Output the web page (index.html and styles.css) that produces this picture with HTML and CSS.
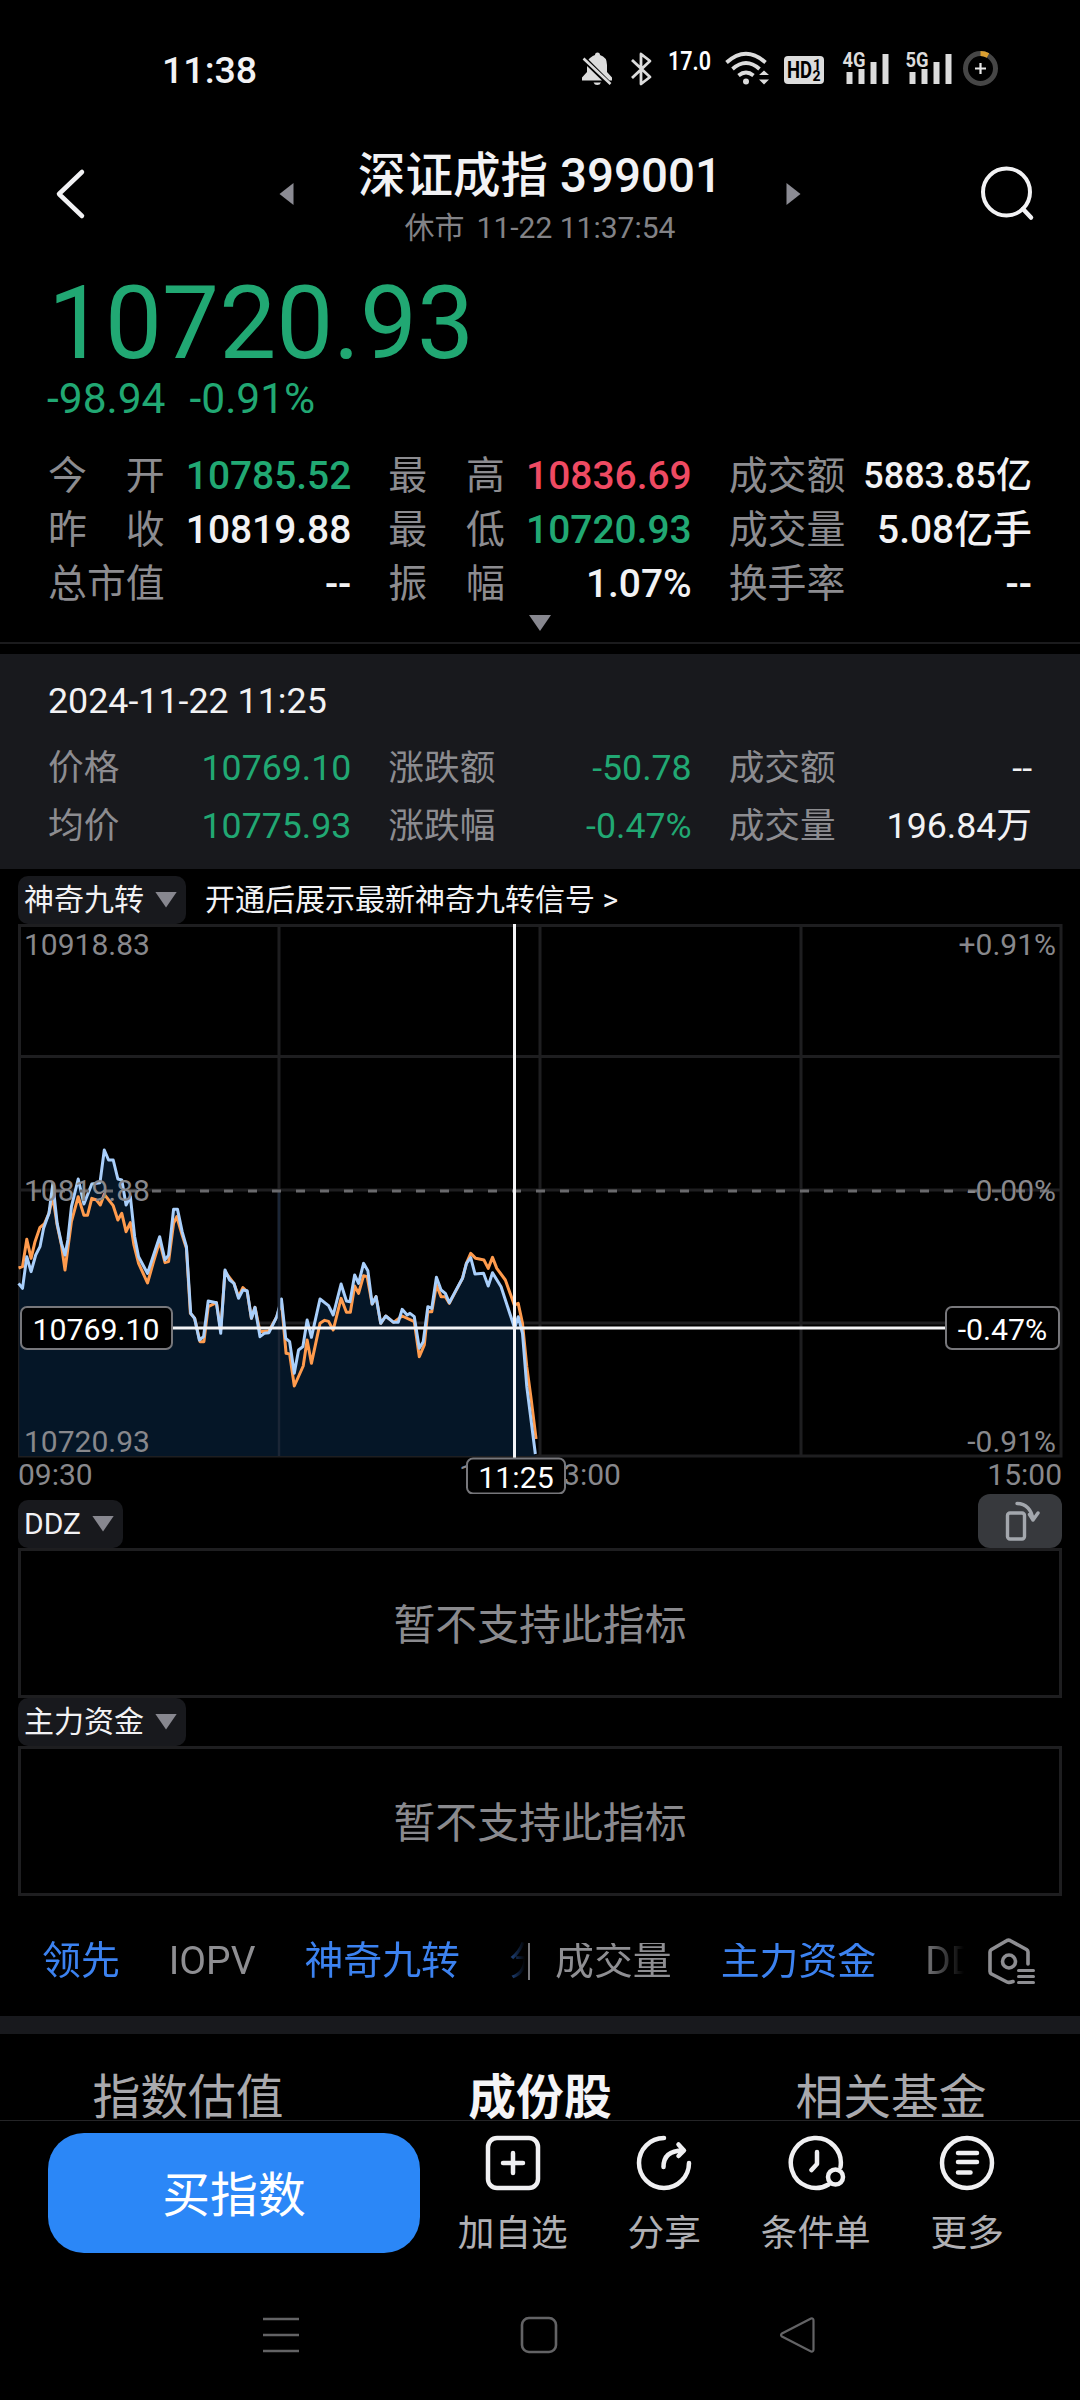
FILE: index.html
```html
<!DOCTYPE html>
<html lang="zh-CN">
<head>
<meta charset="utf-8">
<title>深证成指 399001</title>
<link rel="stylesheet" href="styles.css">
</head>
<body>
<div class="screen">
  <div class="status">
    <span class="clock">11:38</span>
    <svg class="status-icons" width="420" height="40" viewBox="580 50 420 40" fill="#dcdcdc">
      <path d="M590 58 Q593 55.500 595 55 Q595 52.500 597.500 52.500 Q600 52.500 600 55 Q607 57 607 65 V72 L612 77.500 V80.500 L609.500 80.500 L588.500 59.500Z"/>
      <path d="M587 66 L602 80.500 H582 V77.500 L587 72Z"/>
      <path d="M583.500 58.500 L610.500 84" stroke="#dcdcdc" stroke-width="2.600"/>
      <path d="M593.500 82.500 H601 Q600 85 597.200 85 Q594.500 85 593.500 82.500Z"/>
      <path d="M632 60 L650 77 L641 84 V54 L650 61 L632 78" fill="none" stroke="#dcdcdc" stroke-width="2.800" stroke-linejoin="round"/>
      <text x="668" y="70" class="speed" textLength="43" lengthAdjust="spacingAndGlyphs">17.0</text>
      <g fill="none" stroke="#dcdcdc" stroke-width="3.800">
        <path d="M726.500 62.500 Q746 45 765.500 62.500"/>
        <path d="M732.500 69 Q746 57 759.500 69"/>
        <path d="M738.500 75.500 Q746 69.500 753.500 75.500"/>
      </g>
      <circle cx="746" cy="81.500" r="3"/>
      <path d="M759 75 L764 70.500 L769 75Z M759 79.500 L764 84.500 L769 79.500Z"/>
      <rect x="784" y="56" width="40" height="28" rx="4"/>
      <text x="787" y="78" class="hd" textLength="25" lengthAdjust="spacingAndGlyphs">HD</text>
      <text x="813" y="70" class="hd-small">1</text>
      <text x="812.500" y="81" class="hd-small">2</text>
      <text x="842.500" y="67" class="net" textLength="23" lengthAdjust="spacingAndGlyphs">4G</text>
      <path d="M846.500 72h6v12h-6z M858.500 69h6v15h-6z M870.500 62h6v22h-6z M882.500 54h6v30h-6z"/>
      <text x="905.500" y="67" class="net" textLength="23" lengthAdjust="spacingAndGlyphs">5G</text>
      <path d="M909.500 72h6v12h-6z M921.500 69h6v15h-6z M933.500 62h6v22h-6z M945.500 54h6v30h-6z"/>
      <circle cx="980.500" cy="68.500" r="15" fill="none" stroke="#464646" stroke-width="5"/>
      <path d="M980.500 53.500 A15 15 0 0 1 988 55.500" fill="none" stroke="#dca030" stroke-width="5"/>
      <path d="M975 68.500 H986 M980.500 63 V74" stroke="#e8e8e8" stroke-width="2.200"/>
    </svg>
  </div>

  <header class="header">
    <svg class="back" width="34" height="54" viewBox="54 167 34 54" fill="none" stroke="#f2f2f4" stroke-width="4.500" stroke-linecap="round" stroke-linejoin="round"><path d="M82 172 L59 194 L82 216"/></svg>
    <svg class="prev" width="15" height="22" viewBox="0 0 14 22"><path d="M0 11 L14 0 V22Z" fill="#8b8b93"/></svg>
    <div class="heading">
      <h1>深证成指 399001</h1>
      <p><span>休市</span>11-22 11:37:54</p>
    </div>
    <svg class="next" width="15" height="22" viewBox="0 0 14 22"><path d="M14 11 L0 0 V22Z" fill="#8b8b93"/></svg>
    <svg class="search" width="56" height="56" viewBox="0 0 56 56" fill="none" stroke="#f2f2f4" stroke-width="4"><circle cx="27.500" cy="26" r="23.500"/><path d="M44 43 L52 51.500" stroke-width="4.500" stroke-linecap="round"/></svg>
  </header>

  <section class="quote">
    <div class="price">10720.93</div>
    <div class="change"><span>-98.94</span><span>-0.91%</span></div>
    <div class="stats">
      <div><label>今　开</label><b class="down">10785.52</b></div>
      <div><label>最　高</label><b class="up">10836.69</b></div>
      <div><label>成交额</label><b class="fit">5883.85亿</b></div>
      <div><label>昨　收</label><b>10819.88</b></div>
      <div><label>最　低</label><b class="down">10720.93</b></div>
      <div><label>成交量</label><b>5.08亿手</b></div>
      <div><label>总市值</label><b>--</b></div>
      <div><label>振　幅</label><b>1.07%</b></div>
      <div><label>换手率</label><b>--</b></div>
    </div>
    <div class="expand"><i class="caret"></i></div>
  </section>

  <section class="moment">
    <div class="moment-time">2024-11-22 11:25</div>
    <div class="moment-grid">
      <div><label>价格</label><b class="down">10769.10</b></div>
      <div><label>涨跌额</label><b class="down">-50.78</b></div>
      <div><label>成交额</label><b>--</b></div>
      <div><label>均价</label><b class="down">10775.93</b></div>
      <div><label>涨跌幅</label><b class="down">-0.47%</b></div>
      <div><label>成交量</label><b>196.84万</b></div>
    </div>
  </section>

  <section class="charts">
    <div class="tag-row top">
      <span class="tag">神奇九转<i class="caret"></i></span>
      <span class="promo">开通后展示最新神奇九转信号 &gt;</span>
    </div>
    <svg class="chart" width="1080" height="570" viewBox="0 924 1080 570">
      <g stroke="#1e1e20" stroke-width="3" fill="none">
        <path d="M19.500 925.500 H1061 V1456 H19.500Z M279 925 V1456 M540 925 V1456 M801 925 V1456 M19 1056.500 H1061 M19 1190 H1061 M19 1323 H1061"/>
      </g>
      <svg x="0" y="1100" width="560" height="400" viewBox="0 0 1568 1200" preserveAspectRatio="none">
        <path class="area" d="M54 550 L63 565 L75 470 L87 515 L100 465 L112 440 L122 385 L137 340 L148 250 L160 370 L172 430 L182 465 L190 420 L200 320 L219 237 L235 312 L257 252 L280 248 L292 150 L304 180 L317 180 L330 237 L341 240 L353 315 L365 290 L377 410 L388 470 L413 520 L430 465 L447 410 L462 480 L472 465 L486 328 L497 328 L510 395 L522 440 L534 640 L545 655 L558 720 L570 710 L583 603 L606 608 L618 700 L630 510 L643 540 L655 550 L668 595 L680 570 L692 572 L704 655 L714 622 L728 710 L740 700 L753 698 L775 650 L788 597 L800 715 L811 725 L824 820 L836 750 L848 740 L860 660 L872 712 L896 597 L920 617 L933 645 L955 552 L970 603 L980 605 L993 525 L1004 550 L1018 490 L1030 512 L1042 612 L1053 590 L1066 670 L1080 648 L1102 667 L1115 667 L1126 628 L1140 645 L1148 640 L1160 650 L1174 745 L1185 725 L1198 620 L1209 625 L1222 532 L1235 570 L1247 580 L1258 608 L1272 580 L1295 535 L1306 490 L1318 473 L1330 522 L1354 520 L1367 558 L1379 518 L1403 560 L1441 685 L1451 650 L1463 700 L1475 860 L1499 1062 V1068 H54Z"/>
        <path class="line average" d="M52 504 L63 500 L75 418 L87 475 L98 425 L112 382 L124 372 L137 340 L148 290 L160 375 L172 435 L182 510 L200 365 L219 290 L235 346 L245 346 L257 295 L270 300 L281 315 L292 283 L317 317 L330 360 L341 340 L353 395 L365 368 L375 435 L388 490 L413 549 L430 485 L447 425 L462 488 L472 485 L486 370 L495 350 L510 405 L522 445 L533 640 L545 655 L560 725 L571 725 L583 620 L606 608 L618 690 L630 515 L655 550 L668 590 L680 563 L692 575 L704 655 L714 622 L728 695 L753 693 L775 650 L788 605 L801 760 L811 762 L824 858 L849 798 L860 720 L872 790 L896 670 L909 661 L920 664 L933 690 L955 595 L970 637 L981 637 L993 558 L1004 580 L1018 527 L1028 530 L1042 612 L1053 590 L1066 670 L1080 648 L1102 667 L1126 648 L1160 665 L1174 770 L1188 735 L1198 635 L1209 635 L1222 555 L1235 590 L1247 590 L1258 610 L1295 535 L1306 490 L1318 460 L1332 475 L1355 480 L1367 505 L1379 472 L1391 505 L1415 540 L1440 615 L1451 610 L1463 670 L1475 800 L1487 895 L1501 1017"/>
        <path class="line latest" d="M52 550 L63 565 L75 470 L87 515 L100 465 L112 440 L122 385 L137 340 L148 250 L160 370 L172 430 L182 465 L190 420 L200 320 L219 237 L235 312 L257 252 L280 248 L292 150 L304 180 L317 180 L330 237 L341 240 L353 315 L365 290 L377 410 L388 470 L413 520 L430 465 L447 410 L462 480 L472 465 L486 328 L497 328 L510 395 L522 440 L534 640 L545 655 L558 720 L570 710 L583 603 L606 608 L618 700 L630 510 L643 540 L655 550 L668 595 L680 570 L692 572 L704 655 L714 622 L728 710 L740 700 L753 698 L775 650 L788 597 L800 715 L811 725 L824 820 L836 750 L848 740 L860 660 L872 712 L896 597 L920 617 L933 645 L955 552 L970 603 L980 605 L993 525 L1004 550 L1018 490 L1030 512 L1042 612 L1053 590 L1066 670 L1080 648 L1102 667 L1115 667 L1126 628 L1140 645 L1148 640 L1160 650 L1174 745 L1185 725 L1198 620 L1209 625 L1222 532 L1235 570 L1247 580 L1258 608 L1272 580 L1295 535 L1306 490 L1318 473 L1330 522 L1354 520 L1367 558 L1379 518 L1403 560 L1441 685 L1451 650 L1463 700 L1475 860 L1499 1062"/>
      </svg>
      <path d="M279 1190 V1456" stroke="#1b2636" stroke-width="2.500"/>
      <path d="M32 1191 H1061" stroke="#6a6a6d" stroke-width="3" stroke-dasharray="9 15"/>
      <g class="axis">
        <text x="24" y="955">10918.83</text>
        <text x="24" y="1201">10819.88</text>
        <text x="24" y="1452">10720.93</text>
        <text x="1056" y="955" class="end">+0.91%</text>
        <text x="1056" y="1201" class="end">-0.00%</text>
        <text x="1056" y="1452" class="end">-0.91%</text>
        <text x="18" y="1485">09:30</text>
        <text x="540" y="1485" class="mid">11:30/13:00</text>
        <text x="1062" y="1485" class="end">15:00</text>
      </g>
      <path d="M20 1328 H1060 M514.500 924 V1458" stroke="#f4f4f6" stroke-width="3"/>
      <g fill="#000" stroke="#77777b" stroke-width="2">
        <rect x="21" y="1307" width="151" height="42" rx="6"/>
        <rect x="946" y="1307" width="113" height="42" rx="6"/>
        <rect x="467" y="1458.500" width="98" height="35" rx="6"/>
      </g>
      <g class="marker">
        <text x="96" y="1340">10769.10</text>
        <text x="1002.500" y="1340">-0.47%</text>
        <text x="516" y="1488">11:25</text>
      </g>
    </svg>
    <div class="tag-row ddz">
      <span class="tag">DDZ<i class="caret"></i></span>
      <button class="rotate">
        <svg width="84" height="54" viewBox="0 0 84 54" fill="none" stroke="#a3a7ad" stroke-width="3.400" stroke-linecap="round" stroke-linejoin="round"><rect x="29.500" y="19" width="17" height="26" rx="2.500"/><path d="M39 9.500 C48 9.500 54 16 55 26 M51.500 20.500 L55 26 L60 19"/></svg>
      </button>
    </div>
    <div class="empty">暂不支持此指标</div>
    <div class="tag-row"><span class="tag">主力资金<i class="caret"></i></span></div>
    <div class="empty">暂不支持此指标</div>
    <div class="indicators">
      <div class="scroller main">
        <span class="on">领先</span><span>IOPV</span><span class="on">神奇九转</span><span class="on">分时</span>
      </div>
      <div class="scroller sub">
        <span>成交量</span><span class="on">主力资金</span><span>DDZ</span>
      </div>
      <svg class="settings" width="50" height="48" viewBox="986 1934 50 48" fill="none" stroke="#8e8e92" stroke-width="3.600" stroke-linecap="round" stroke-linejoin="round"><path d="M1028 1961 V1949 Q1028 1947.500 1026.500 1946.500 L1010 1937.500 Q1008.500 1936.800 1007 1937.500 L991.500 1946.500 Q990 1947.500 990 1949 V1968.500 Q990 1970 991.500 1971 L1007 1979 Q1009 1980 1013 1978.500"/><circle cx="1009" cy="1958.500" r="6.500"/><path d="M1018.500 1967.500 H1033.500 M1018.500 1973.500 H1033.500 M1018.500 1979.500 H1033.500" stroke-width="3"/></svg>
    </div>
  </section>

  <div class="band"></div>
  <nav class="tabs"><span>指数估值</span><span class="active">成份股</span><span>相关基金</span></nav>

  <footer class="actions">
    <button class="buy">买指数</button>
    <div class="action"><svg width="60" height="60" viewBox="0 0 60 60"><rect x="5" y="5" width="50" height="50" rx="9"/><path d="M20 30 H40 M30 20 V40"/></svg>加自选</div>
    <div class="action"><svg width="60" height="60" viewBox="0 0 60 60"><path d="M30 5 A25 25 0 1 0 55 30 M29.500 34 C29.500 23 36 17.500 49 17.500 M44.500 11.500 L50 17.500 L44.500 23"/></svg>分享</div>
    <div class="action"><svg width="60" height="60" viewBox="0 0 60 60"><path d="M42.500 51.500 A25 25 0 1 1 54.500 34 M31 19 V31 L25.500 37"/><circle cx="49.500" cy="44" r="7.500"/></svg>条件单</div>
    <div class="action"><svg width="60" height="60" viewBox="0 0 60 60"><circle cx="30" cy="30" r="25"/><path d="M21 20 H40 M21 29 H40 M21 39.500 H33.500"/></svg>更多</div>
  </footer>

  <div class="system">
    <svg width="38" height="38" viewBox="0 0 38 38"><path d="M1 3H37M1 19H37M1 35H37" /></svg>
    <svg width="38" height="38" viewBox="0 0 38 38"><rect x="2" y="2" width="34" height="34" rx="7"/></svg>
    <svg width="38" height="38" viewBox="0 0 38 38"><path d="M33 2.500 L4 17.500 Q2 19 4 20.500 L33 35.500 Q35.500 36 35.500 33.500 V4.500 Q35.500 2 33 2.500Z" stroke-width="2.200"/></svg>
  </div>
</div>
</body>
</html>
```
FILE: styles.css
```css
* { box-sizing: border-box; }
body {
  margin: 0;
  background: #000;
  color: #f2f2f4;
  font-family: Roboto, "Noto Sans CJK SC", sans-serif;
}
button { border: 0; padding: 0; font: inherit; color: inherit; }
svg { display: block; flex: none; }
.screen { width: 1080px; height: 2400px; overflow: hidden; }
.down { color: #21a873; }
.up { color: #ef4a62; }

.status { display: flex; justify-content: space-between; height: 110px; padding: 50px 80px 0 162px; }
.clock { font-size: 37.500px; line-height: 41px; font-weight: 500; }
.speed { font-size: 26px; font-weight: 600; fill: #fff; }
.hd { font-size: 23px; font-weight: 700; fill: #000; }
.hd-small { font-size: 14px; font-weight: 700; fill: #000; }
.net { font-size: 20px; font-weight: 700; }

.header { display: flex; align-items: center; height: 150px; padding: 18px 45px 0 54px; }
.prev { margin-left: 191px; }
.heading { flex: 1; text-align: center; padding-top: 7px; }
.next { margin-right: 178px; }
.heading h1 { margin: 0; font-size: 47.500px; line-height: 56px; font-weight: 500; white-space: nowrap; }
.heading p { margin: 4px 0 0; font-size: 30px; line-height: 40px; color: #828286; white-space: nowrap; }
.heading p span { margin-right: 12px; }

.quote { height: 384px; padding-top: 14px; border-bottom: 2px solid #1b1b1d; }
.price { padding-left: 48px; font-size: 101.500px; line-height: 100px; color: #21a873; }
.change { display: flex; gap: 24px; padding-left: 47px; font-size: 42.500px; line-height: 50px; color: #21a873; }
.stats, .moment-grid { display: grid; grid-template-columns: repeat(3, 1fr); column-gap: 37px; padding: 0 48px; }
.stats { margin-top: 25px; font-size: 38.900px; line-height: 54px; }
.stats div, .moment-grid div { display: flex; justify-content: space-between; white-space: nowrap; }
.stats label, .moment-grid label { color: #8c8c90; }
.stats b { font-weight: 500; }
.stats .fit { font-size: 36px; }
.expand { display: flex; justify-content: center; padding-top: 4px; }
.caret { width: 22px; height: 16px; background: #87878f; clip-path: polygon(0 0, 100% 0, 50% 100%); }

.moment { height: 215px; margin-top: 10px; padding-top: 24px; background: #18191d; }
.moment-time { padding-left: 48px; font-size: 35.800px; line-height: 46px; }
.moment-grid { margin-top: 16px; font-size: 35.700px; line-height: 57.500px; }
.moment-grid b { font-weight: 400; }

.tag-row { display: flex; align-items: flex-end; height: 48px; padding: 0 18px; }
.tag-row.top { height: 55px; }
.tag-row.ddz { height: 54px; justify-content: space-between; }
.tag { display: flex; align-items: center; gap: 11px; height: 48px; padding: 0 9px 0 6px; border-radius: 10px; background: #18191d; font-size: 30px; line-height: 44px; padding-bottom: 1px; }
.promo { margin-left: 19px; font-size: 30px; line-height: 48px; }
.rotate { width: 84px; height: 54px; border-radius: 12px; background: #37393d; }
.area { fill: #051627; }
.line { fill: none; stroke-width: 3; stroke-linejoin: round; vector-effect: non-scaling-stroke; }
.average { stroke: #ff9b4d; }
.latest { stroke: #a9cffb; }
.axis { font-size: 30px; fill: #88888c; }
.end { text-anchor: end; }
.mid { text-anchor: middle; }
.marker { font-size: 30.300px; fill: #fff; text-anchor: middle; }
.empty { height: 150px; margin: 0 18px; border: 3px solid #1e1e20; font-size: 41.900px; line-height: 150px; text-align: center; color: #8a8a8e; }

.indicators { display: flex; align-items: center; height: 120px; padding: 10px 44px 0 42px; font-size: 38.900px; line-height: 60px; color: #8e8e92; }
.scroller { display: flex; overflow: hidden; white-space: nowrap; }
.scroller span { flex: none; }
.indicators .on { color: #3c82f0; }
.main { width: 486px; gap: 49px; -webkit-mask-image: linear-gradient(90deg, #000 455px, transparent 483px); mask-image: linear-gradient(90deg, #000 455px, transparent 483px); }
.sub { width: 436px; gap: 49px; padding-left: 25px; margin-right: 22px; border-left: 2px solid #77777b; height: 37px; align-items: center; -webkit-mask-image: linear-gradient(90deg, #000 390px, transparent 436px); mask-image: linear-gradient(90deg, #000 390px, transparent 436px); }

.band { height: 18px; background: #18191d; }
.tabs { display: grid; grid-template-columns: 376px 328px 374px; height: 87px; padding-top: 34px; overflow: hidden; border-bottom: 1px solid #242426; font-size: 47.800px; line-height: 60px; text-align: center; color: #a9a9ad; }
.active { color: #f4f4f6; font-weight: 700; }

.actions { display: flex; height: 135px; padding: 12px 35px 0 48px; }
.buy { width: 372px; height: 120px; margin-right: 17px; border-radius: 36px; background: #2b87f7; color: #fff; font-size: 47.800px; padding-bottom: 4px; }
.action { display: flex; flex-direction: column; align-items: center; width: 151.500px; font-size: 36.700px; line-height: 50px; color: #b0b0b4; }
.action svg { margin-bottom: 16px; fill: none; stroke: #f0f0f2; stroke-width: 4.500; stroke-linecap: round; stroke-linejoin: round; }

.system { display: flex; gap: 220px; padding: 60px 0 0 262px; }
.system svg { fill: none; stroke: #636365; stroke-width: 2.600; }
```
